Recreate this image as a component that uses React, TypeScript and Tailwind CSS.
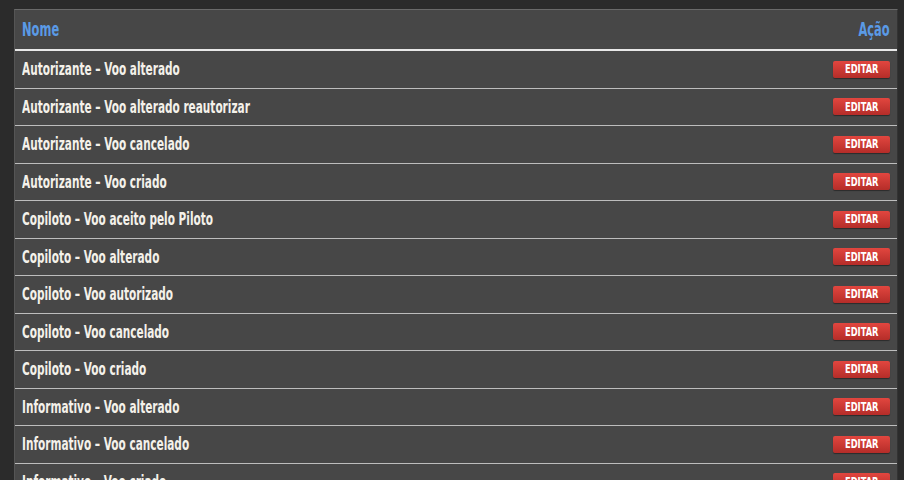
import React from "react";

const rows = [
  "Autorizante – Voo alterado",
  "Autorizante – Voo alterado reautorizar",
  "Autorizante – Voo cancelado",
  "Autorizante – Voo criado",
  "Copiloto – Voo aceito pelo Piloto",
  "Copiloto – Voo alterado",
  "Copiloto – Voo autorizado",
  "Copiloto – Voo cancelado",
  "Copiloto – Voo criado",
  "Informativo – Voo alterado",
  "Informativo – Voo cancelado",
  "Informativo – Voo criado",
];

export default function App() {
  return (
    <div
      className="w-[904px] h-[480px] overflow-hidden bg-[#2b2b2b] pt-[9px] pl-[14px] pr-[6px]"
      style={{ fontFamily: '"DejaVu Sans Condensed", "DejaVu Sans", sans-serif' }}
    >
      <div className="bg-[#474747] border-t border-[#6a6a6a] border-l border-r border-l-[#555] border-r-[#333]">
        <div className="flex items-center justify-between h-[41px] px-[7px] border-b-2 border-[#e8e8e8]">
          <span className="inline-block origin-left scale-x-[0.67] text-[#5a9ae6] font-bold text-[19px] leading-none">
            Nome
          </span>
          <span className="inline-block origin-right scale-x-[0.67] text-[#5a9ae6] font-bold text-[19px] leading-none">
            Ação
          </span>
        </div>
        {rows.map((r) => (
          <div
            key={r}
            className="flex items-center justify-between h-[37.5px] pl-[7px] pr-[7px] border-b-[1.5px] border-[#bdbdbd]"
          >
            <span className="inline-block origin-left scale-x-[0.65] whitespace-nowrap text-[#f4f1ea] font-bold text-[18px] leading-none">
              {r}
            </span>
            <button className="w-[57px] h-[17px] rounded-[2px] bg-gradient-to-b from-[#e2463f] to-[#b52d29] shadow-[0_1px_1px_rgba(0,0,0,0.4)] flex items-center justify-center">
              <span className="inline-block scale-x-[0.77] text-white text-[12px] font-bold leading-none">
                EDITAR
              </span>
            </button>
          </div>
        ))}
      </div>
    </div>
  );
}
